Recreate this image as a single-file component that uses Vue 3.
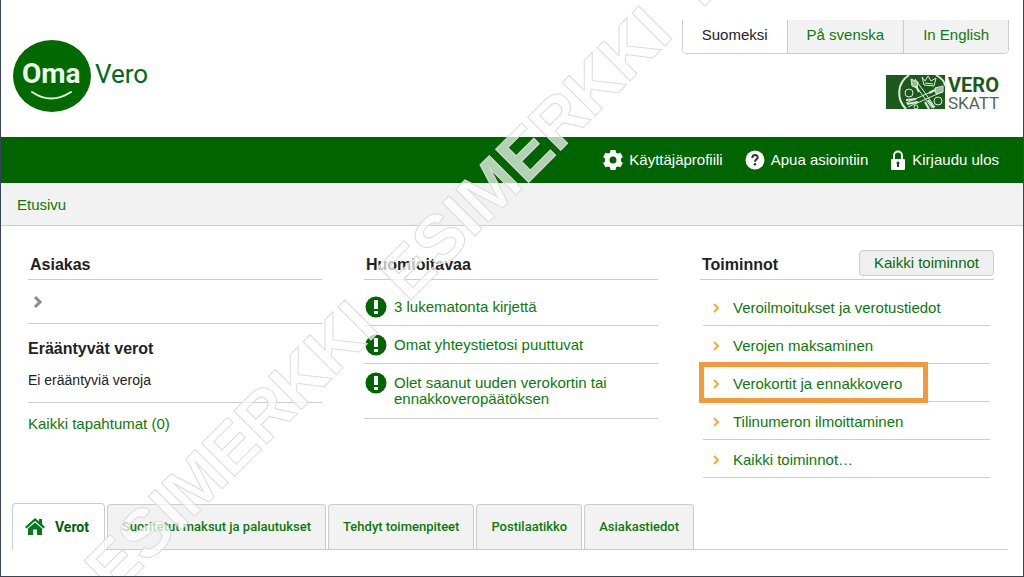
<template>
  <div class="page">
    <header class="header">
      <a href="#" class="oma-logo" aria-label="OmaVero">
        <svg width="140" height="76" viewBox="0 0 140 76">
          <ellipse cx="39" cy="38" rx="39" ry="36" fill="#006a00" />
          <text x="9" y="45" class="logo-oma">Oma</text>
          <text x="82" y="45" class="logo-vero">Vero</text>
          <path d="M19 54Q38 67 58 54" fill="none" stroke="#e4f5dc" stroke-width="2" stroke-linecap="round" />
        </svg>
      </a>

      <div class="header-right">
        <nav class="languages">
          <a
            v-for="lang in languages"
            :key="lang"
            href="#"
            :class="['language', { 'language-active': lang === activeLanguage }]"
            @click.prevent="activeLanguage = lang"
          >{{ lang }}</a>
        </nav>

        <svg class="vero-logo" width="116" height="40" viewBox="0 0 116 40">
          <rect x="0" y="1" width="59" height="34" fill="#1c5a1c" />
          <g fill="none" stroke="#dfeadf" stroke-width="1">
            <path d="M20 35C10 25 11 9 23 1M50 1C57 5 59 8 59 12" stroke-width="2" />
            <path d="M26 7L46 34M29 5L49 33M54 14L20 29M56 18L22 33" />
            <path d="M25 5L32 8L31 14L26 12ZM57 12L49 14L50 20L57 18Z" fill="#9dbd9d" />
            <path d="M20 26L30 25M21 30L32 28M39 28L43 35M42 26L48 34M30 12L33 18M49 16L43 19" stroke-width="2" />
            <circle cx="23" cy="19" r="4" />
            <circle cx="52" cy="27" r="4" />
            <circle cx="30" cy="33" r="2" />
            <path d="M36 3L39 7L42 2L45 7L50 4L48 12L38 11ZM39 9L47 10" />
          </g>
          <text x="62" y="18" class="logo-vero-bold">VERO</text>
          <text x="62" y="35" class="logo-skatt">SKATT</text>
        </svg>
      </div>
    </header>

    <nav class="toolbar">
      <a href="#" class="toolbar-link">
        <svg width="20" height="20" viewBox="0 0 20 20">
          <path
            fill="#fff"
            fill-rule="evenodd"
            d="M7.5 0h5l.6 2.7 1.6.9 2.8-.9 2.4 4.2-2 1.9v2.4l2 1.9-2.4 4.2-2.8-.9-1.6.9-.6 2.7h-5l-.6-2.7-1.6-.9-2.8.9L.1 13.1l2-1.9V8.8l-2-1.9L2.5 2.7l2.8.9 1.6-.9zM10 6.5a3.5 3.5 0 100 7 3.5 3.5 0 000-7z"
          />
        </svg>
        Käyttäjäprofiili
      </a>
      <a href="#" class="toolbar-link">
        <svg width="20" height="20" viewBox="0 0 20 20">
          <circle cx="10" cy="10" r="9.5" fill="#fff" />
          <path d="M7.3 8C7.3 4 13 4.2 12.7 7.6C12.5 9.3 10 9.4 10 11.8" fill="none" stroke="#333" stroke-width="2" />
          <circle cx="10" cy="14.3" r="1.3" fill="#333" />
        </svg>
        Apua asiointiin
      </a>
      <a href="#" class="toolbar-link">
        <svg width="16" height="20" viewBox="0 0 16 20">
          <path d="M4 10V5.5a4 4 0 018 0V10" fill="none" stroke="#fff" stroke-width="2" />
          <rect x="1" y="9" width="14" height="11" rx="1" fill="#fff" />
          <path d="M8 11.5a1.5 1.5 0 011 2.6V17H7v-2.9a1.5 1.5 0 011-2.6z" fill="#333" />
        </svg>
        Kirjaudu ulos
      </a>
    </nav>

    <nav class="breadcrumb">
      <a href="#">Etusivu</a>
    </nav>

    <main class="columns">
      <section>
        <h2 class="column-title">Asiakas</h2>
        <a href="#" class="customer-row" aria-label="Asiakas">
          <svg width="10" height="14" viewBox="0 0 10 14">
            <path d="M2 2L7 7L2 12" fill="none" stroke="#8c8c8c" stroke-width="3" />
          </svg>
        </a>
        <div class="overdue">
          <h2 class="overdue-title">Erääntyvät verot</h2>
          <p class="overdue-text">Ei erääntyviä veroja</p>
        </div>
        <a href="#" class="all-events">Kaikki tapahtumat (0)</a>
      </section>

      <section>
        <h2 class="column-title">Huomioitavaa</h2>
        <ul class="list">
          <li v-for="notice in notices" :key="notice" class="notice">
            <svg class="notice-icon" width="22" height="22" viewBox="0 0 22 22">
              <circle cx="11" cy="11" r="10.5" fill="#006400" />
              <path d="M9 4h4v9H9zM9 15h4v3H9z" fill="#fff" />
            </svg>
            <a href="#">{{ notice }}</a>
          </li>
        </ul>
      </section>

      <section>
        <div class="column-head">
          <h2 class="column-title">Toiminnot</h2>
          <button type="button" class="all-actions">Kaikki toiminnot</button>
        </div>
        <ul class="list action-list">
          <li
            v-for="action in actions"
            :key="action"
            :class="['action', { 'action-highlight': action === highlighted }]"
          >
            <svg width="7" height="10" viewBox="0 0 7 10">
              <path d="M1 1L5 5L1 9" fill="none" stroke="#f5a940" stroke-width="2" />
            </svg>
            <a href="#">{{ action }}</a>
          </li>
        </ul>
      </section>
    </main>

    <nav class="tabs">
      <a
        v-for="tab in tabs"
        :key="tab"
        href="#"
        :class="['tab', { 'tab-active': tab === activeTab }]"
        @click.prevent="activeTab = tab"
      >
        <svg v-if="tab === 'Verot'" width="20" height="17" viewBox="0 0 20 17">
          <path d="M0 9L10 0L14 3.5V1H17V6L20 9L18.5 10.5L10 3L1.5 10.5Z" fill="#007a1c" />
          <path d="M3 10.5L10 4.5L17 10.5V17H12V11.5H8V17H3Z" fill="#007a1c" />
        </svg>
        {{ tab }}
      </a>
    </nav>

    <svg class="watermark" aria-hidden="true">
      <text x="113" y="597" transform="rotate(-45 113 597)">{{ watermark }}</text>
    </svg>
  </div>
</template>

<script setup>
import { ref } from 'vue'

const languages = ['Suomeksi', 'På svenska', 'In English']
const activeLanguage = ref('Suomeksi')

const notices = [
  '3 lukematonta kirjettä',
  'Omat yhteystietosi puuttuvat',
  'Olet saanut uuden verokortin tai ennakkoveropäätöksen'
]

const actions = [
  'Veroilmoitukset ja verotustiedot',
  'Verojen maksaminen',
  'Verokortit ja ennakkovero',
  'Tilinumeron ilmoittaminen',
  'Kaikki toiminnot…'
]
const highlighted = 'Verokortit ja ennakkovero'

const tabs = [
  'Verot',
  'Suoritetut maksut ja palautukset',
  'Tehdyt toimenpiteet',
  'Postilaatikko',
  'Asiakastiedot'
]
const activeTab = ref('Verot')

// Non-breaking spaces keep the double gap between the repeats
const watermark = 'ESIMERKKI\u00a0\u00a0ESIMERKKI\u00a0\u00a0ESIMERKKI'
</script>

<style>
body {
  margin: 0;
  background: #fff;
}
</style>

<style scoped>
.page {
  position: relative;
  overflow: hidden;
  border: solid #36435a;
  border-width: 0 1px 2px;
  background: #fff;
  color: #222;
  font-family: "Liberation Sans", Arial, sans-serif;
  font-size: 15px;
  line-height: 16px;
}

a {
  color: #0a7a0a;
  text-decoration: none;
}

/* Header */
.header {
  display: flex;
  justify-content: space-between;
  height: 137px;
}

.oma-logo {
  padding: 38px 0 0 12px;
}

.oma-logo svg,
.vero-logo {
  display: block;
  overflow: visible;
}

.logo-oma {
  fill: #eefae8;
  font: bold 28px Roboto, sans-serif;
}

.logo-vero {
  fill: #006a20;
  font: 26px Roboto, sans-serif;
}

.logo-vero-bold {
  fill: #1c5a1c;
  font: bold 20px Roboto, sans-serif;
}

.logo-skatt {
  fill: #4c6b4c;
  font: 17px Roboto, sans-serif;
}

.header-right {
  display: flex;
  flex-direction: column;
  align-items: flex-end;
  gap: 20px;
  padding: 20px 14px 0 0;
}

.languages {
  display: flex;
  border: 1px solid #ccc;
  border-top: 0;
  border-radius: 0 0 5px 5px;
  overflow: hidden;
}

.language {
  padding: 7px 19px 10px;
  background: #f2f2f2;
}

.language + .language {
  border-left: 1px solid #ccc;
}

.language-active {
  background: #fff;
  color: #222;
}

.vero-logo {
  margin-right: 7px;
}

/* Green bar */
.toolbar {
  display: flex;
  align-items: center;
  justify-content: flex-end;
  gap: 22px;
  height: 46px;
  padding-right: 24px;
  background: #006400;
}

.toolbar-link {
  display: flex;
  align-items: center;
  gap: 6px;
  color: #fff;
}

.breadcrumb {
  padding: 14px 16px 12px;
  border-bottom: 1px solid #ccc;
  background: #f2f2f2;
}

/* Content columns */
.columns {
  display: grid;
  grid-template-columns: repeat(3, 1fr);
  gap: 42px;
  height: 277px;
  padding: 0 29px 0 27px;
}

.column-title {
  margin: 0;
  padding: 31px 2px 6px;
  border-bottom: 1px solid #ccc;
  font-size: 16px;
  line-height: 16px;
}

.column-head {
  display: flex;
  align-items: flex-end;
  justify-content: space-between;
  border-bottom: 1px solid #ccc;
}

.column-head .column-title {
  border-bottom: 0;
}

.all-actions {
  margin-bottom: 3px;
  padding: 4px 14px;
  border: 1px solid #ccc;
  border-radius: 4px;
  background: #efefef;
  color: #0a6a0a;
  font: inherit;
}

.customer-row {
  display: flex;
  align-items: center;
  height: 43px;
  padding-left: 5px;
  border-bottom: 1px solid #ccc;
}

.overdue {
  padding: 17px 0 14px;
  border-bottom: 1px solid #ccc;
}

.overdue-title {
  margin: 0 0 15px;
  font-size: 16px;
  line-height: 16px;
}

.overdue-text {
  margin: 0;
  font-size: 14px;
}

.all-events {
  display: block;
  padding-top: 13px;
}

.list {
  margin: 0;
  padding: 8px 0 0;
  list-style: none;
}

.notice {
  display: flex;
  gap: 7px;
  padding: 8px 0 7px 1px;
  border-bottom: 1px solid #ccc;
}

.notice-icon {
  flex: none;
}

.notice a {
  max-width: 220px;
  padding-top: 3px;
}

.notice:last-child {
  padding-bottom: 11px;
}

.action-list {
  margin: 0 4px 0 3px;
}

.action {
  position: relative;
  display: flex;
  align-items: center;
  gap: 13px;
  padding: 12px 0 9px 10px;
  border-bottom: 1px solid #ccc;
}

.action-highlight::after {
  content: "";
  position: absolute;
  top: -2px;
  bottom: -2px;
  left: -4px;
  width: 219px;
  border: 5px solid #f39a3d;
}

/* Bottom tabs */
.tabs {
  display: flex;
  align-items: flex-end;
  gap: 2px;
  margin: 0 15px 26px 11px;
  border-bottom: 1px solid #ccc;
}

.tab {
  display: flex;
  align-items: center;
  gap: 10px;
  padding: 14px;
  border: 1px solid #ccc;
  border-bottom: 0;
  border-radius: 4px 4px 0 0;
  background: #f2f2f2;
  font-family: Roboto, sans-serif;
  font-size: 13px;
  font-weight: 500;
}

.tab-active {
  margin-bottom: -1px;
  padding: 14px 15px 15px 12px;
  background: #fff;
  color: #005f00;
  font-size: 14px;
  font-weight: bold;
}

.watermark {
  position: absolute;
  inset: 0;
  width: 100%;
  height: 100%;
  pointer-events: none;
}

.watermark text {
  fill: rgba(255, 255, 255, 0.7);
  stroke: #dcdcdc;
  stroke-width: 1px;
  font-size: 68px;
  font-weight: bold;
}
</style>
